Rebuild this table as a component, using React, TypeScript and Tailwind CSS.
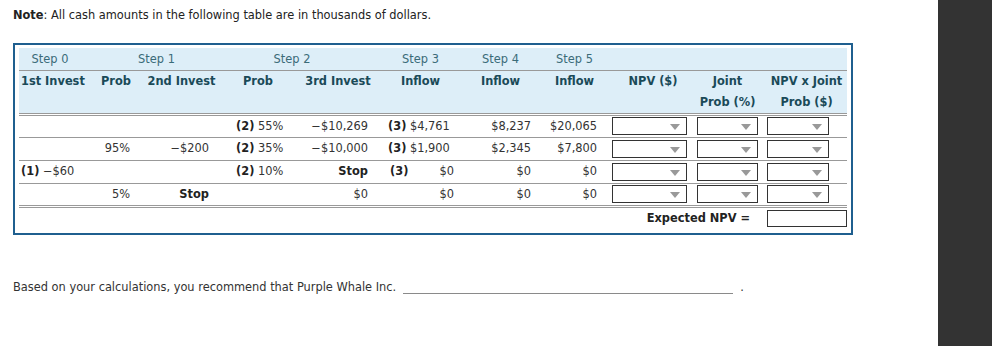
const Dropdown = ({ w }: { w: string }) => {
  return (
    <div className={`relative h-[18px] ${w} border border-[#333] bg-white`}>
      <span className="absolute right-[6px] top-[6px] h-0 w-0 border-x-[5px] border-t-[6px] border-x-transparent border-t-[#999]" />
    </div>
  );
};

const rows = [
  { a: "", b: "", c: "", d: "55%", e: "−$10,269", f: "$4,761", g: "$8,237", h: "$20,065" },
  { a: "", b: "95%", c: "−$200", d: "35%", e: "−$10,000", f: "$1,900", g: "$2,345", h: "$7,800" },
  { a: "−$60", b: "", c: "", d: "10%", e: "Stop", f: "$0", g: "$0", h: "$0" },
  { a: "", b: "5%", c: "Stop", d: "", e: "$0", f: "$0", g: "$0", h: "$0" },
];

export default function App() {
  return (
    <div className="flex h-[346px] w-[992px] bg-white font-['DejaVu_Sans',Verdana,sans-serif] text-[11.4px] text-[#333]">
      <div className="flex-1 pl-[13px] pt-[7px]">
        <p className="leading-[16px] text-[#222]">
          <b>Note</b>: All cash amounts in the following table are in thousands of dollars.
        </p>

        <div className="mt-[20px] w-[840px] border-2 border-[#1f5f8f] px-[4px] pt-[3px] pb-[4px]">
          <table className="w-[828px] table-fixed border-collapse">
            <colgroup>
              <col className="w-[76px]" />
              <col className="w-[42px]" />
              <col className="w-[89px]" />
              <col className="w-[70px]" />
              <col className="w-[84px]" />
              <col className="w-[81px]" />
              <col className="w-[79px]" />
              <col className="w-[65px]" />
              <col className="w-[88px]" />
              <col className="w-[69px]" />
              <col className="w-[85px]" />
            </colgroup>
            <thead className="bg-[#ddeef8]">
              <tr className="h-[22px] border-b border-[#999] text-[#3a6b78]">
                <th className="pr-[14px] pt-[1px] text-center font-normal">Step 0</th>
                <th colSpan={2} className="pr-[8px] pt-[1px] text-center font-normal">Step 1</th>
                <th colSpan={2} className="pr-[22px] pt-[1px] text-center font-normal">Step 2</th>
                <th className="pt-[1px] text-center font-normal">Step 3</th>
                <th className="pt-[1px] text-center font-normal">Step 4</th>
                <th className="pl-[4px] pt-[1px] text-center font-normal">Step 5</th>
                <th />
                <th />
                <th />
              </tr>
              <tr className="h-[44px] border-b-[3px] border-double border-[#999] align-top leading-[21px] text-[#1a4a58]">
                <th className="pl-[2px] text-left">1st Invest</th>
                <th className="text-center">Prob</th>
                <th className="text-center">2nd Invest</th>
                <th className="pr-[6px] text-center">Prob</th>
                <th className="text-center">3rd Invest</th>
                <th className="text-center">Inflow</th>
                <th className="text-center">Inflow</th>
                <th className="pl-[4px] text-center">Inflow</th>
                <th className="pl-[8px] text-center">NPV ($)</th>
                <th className="text-center">
                  Joint
                  <br />
                  Prob (%)
                </th>
                <th className="pl-[4px] text-center">
                  NPV x Joint
                  <br />
                  Prob ($)
                </th>
              </tr>
            </thead>
            <tbody>
              {rows.map((r, i) => (
                <tr
                  key={i}
                  className={
                    i < rows.length - 1
                      ? "h-[23px] border-b border-[#999]"
                      : "h-[23px] border-b-[3px] border-double border-[#999]"
                  }
                >
                  <td className="pl-[2px] pt-[1px]">
                    {r.a && (
                      <>
                        <b className="text-[#222]">(1)</b> {r.a}
                      </>
                    )}
                  </td>
                  <td className="pr-[7px] pt-[1px] text-right">{r.b}</td>
                  <td className="pr-[17px] pt-[1px] text-right">
                    {r.c === "Stop" ? <b className="text-[#222]">Stop</b> : r.c}
                  </td>
                  <td className="pl-[10px] pt-[1px]">
                    {r.d && (
                      <>
                        <b className="text-[#222]">(2)</b> {r.d}
                      </>
                    )}
                  </td>
                  <td className="pr-[12px] pt-[1px] text-right">
                    {r.e === "Stop" ? <b className="text-[#222]">Stop</b> : r.e}
                  </td>
                  <td className="pl-[8px] pr-[7px] pt-[1px]">
                    {i < 2 && (
                      <>
                        <b className="text-[#222]">(3)</b> {r.f}
                      </>
                    )}
                    {i === 2 && (
                      <div className="flex justify-between pl-[2px]">
                        <b className="text-[#222]">(3)</b>
                        <span>{r.f}</span>
                      </div>
                    )}
                    {i === 3 && <div className="text-right">{r.f}</div>}
                  </td>
                  <td className="pr-[9px] pt-[1px] text-right">{r.g}</td>
                  <td className="pr-[8px] pt-[1px] text-right">{r.h}</td>
                  <td className="pl-[7px]">
                    <Dropdown w="w-[75px]" />
                  </td>
                  <td className="pl-[4px]">
                    <Dropdown w="w-[61px]" />
                  </td>
                  <td className="pl-[5px]">
                    <Dropdown w="w-[62px]" />
                  </td>
                </tr>
              ))}
              <tr className="h-[23px]">
                <td colSpan={10} className="pr-[12px] pt-[1px] text-right">
                  <b className="text-[#222]">Expected NPV =</b>
                </td>
                <td className="pl-[5px]">
                  <div className="h-[17px] w-[80px] border border-[#333] bg-white" />
                </td>
              </tr>
            </tbody>
          </table>
        </div>

        <div className="mt-[44px] flex items-end text-[#333]">
          <span className="leading-[16px]">
            Based on your calculations, you recommend that Purple Whale Inc.
          </span>
          <span className="mb-[1px] ml-[7px] w-[330px] border-b border-[#8a8a8a]" />
          <span className="ml-[7px] leading-[16px]">.</span>
        </div>
      </div>
      <div className="w-[54px] bg-[#333]" />
    </div>
  );
}
